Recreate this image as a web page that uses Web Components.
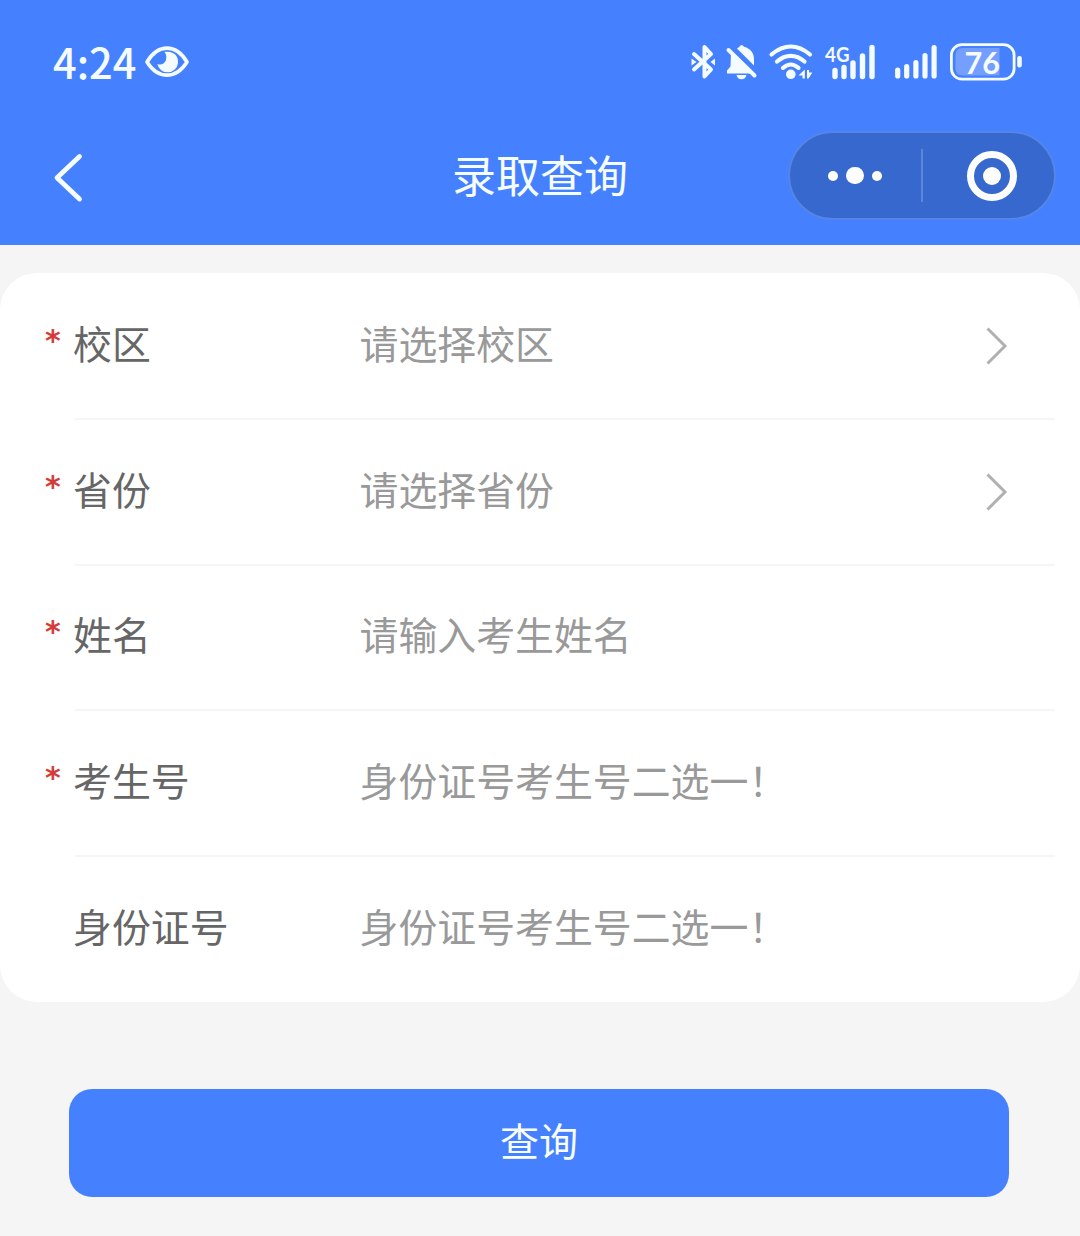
<!DOCTYPE html>
<html lang="zh-CN">
<head>
<meta charset="utf-8">
<title>录取查询</title>
<style>
html,body{margin:0;padding:0}
body{width:1080px;height:1236px;overflow:hidden;background:#f5f5f5;font-family:"Noto Sans CJK SC","Noto Sans",sans-serif}
</style>
</head>
<body>
<query-page></query-page>
<script>
const define = (name, html) => {
  const t = document.createElement('template');
  t.innerHTML = html;
  customElements.define(name, class extends HTMLElement {
    constructor() {
      super();
      this.attachShadow({ mode: 'open' }).appendChild(t.content.cloneNode(true));
    }
  });
};

define('status-bar', `
<style>
:host{display:flex;height:124px;box-sizing:border-box;padding:0 58px 0 53px;align-items:center;justify-content:space-between;color:#f4fcff}
svg{display:block;flex:none}
.left,.right{display:flex;align-items:center}
.time{font:500 41.500px/50px "Noto Sans CJK SC",sans-serif;width:92px;white-space:nowrap;margin-bottom:3px}
</style>
<div class="left">
  <span class="time">4:24</span>
  <svg width="44" height="34" viewBox="0 0 44 34"><path d="M2 17C13-1.500 31-1.500 42 17C31 34.500 13 34.500 2 17Z" fill="none" stroke="currentColor" stroke-width="3.600" stroke-linejoin="round"/><path d="M19.500 7C29 5.500 33.500 11 33 18A10.500 10.500 0 0 1 12.300 19C16 20.500 20 18.500 21 15C22 11.500 21 9 19.500 7Z" fill="currentColor"/></svg>
</div>
<div class="right">
  <svg width="28" height="44" viewBox="690 40 28 44"><path d="M694 54L711 69.500L704.500 76.500V47L711 54L694 69.500" fill="none" stroke="currentColor" stroke-width="4" stroke-linejoin="round" stroke-linecap="round"/><path d="M691.500 58.500L696.500 62L691.500 65.500ZM715 58.500L710.500 62L715 65.500Z" fill="currentColor"/></svg>
  <svg width="46" height="44" viewBox="718 40 46 44"><path d="M728.500 50L754.500 75.500" stroke="currentColor" stroke-width="4" stroke-linecap="round"/><path d="M737 48.500C738 47.500 739 47 739.500 46.700Q741.500 43.300 744 46.700C751 48.500 754 53.500 754 59V65.500ZM731 53L751 73.500H727V70.500L730.500 66.500ZM736.500 75H746.500Q745.500 79.200 741.500 79.200Q737.500 79.200 736.500 75Z" fill="currentColor"/></svg>
  <svg width="56" height="44" viewBox="764 40 56 44"><g fill="none" stroke="currentColor" stroke-width="4.200" stroke-linecap="round"><path d="M771.500 54.500Q781 46.500 790.800 46.500Q800.500 46.500 810 54.500"/><path d="M777 61.500Q783.500 55.800 790.800 55.800Q798 55.800 804.500 61.500"/><path d="M783 67.800Q787 64.500 790.800 64.500Q794.500 64.500 798.500 67.800"/></g><circle cx="790.800" cy="74.300" r="4.800" fill="currentColor"/><path d="M804.800 69.500V78.500H802.500V75.500H798.500ZM807 70H809V72.500H812.300L808.500 78.500H807Z" fill="currentColor"/></svg>
  <svg width="64" height="44" viewBox="820 40 64 44"><text x="825" y="61.500" font-family="Lato,sans-serif" font-weight="700" font-size="21" textLength="24.500" lengthAdjust="spacingAndGlyphs" fill="currentColor">4G</text><path d="M835 70.500V76.500M844 67.500V76.500M853 63V76.500M862.500 56V76.500M872 47.500V76.500" stroke="currentColor" stroke-width="5.400" stroke-linecap="round"/></svg>
  <svg width="58" height="44" viewBox="884 40 58 44"><path d="M897.700 70V76M906.700 66.500V76M915.900 62.500V76M925 55.500V76M934.100 47.500V76" stroke="currentColor" stroke-width="5.200" stroke-linecap="round"/></svg>
  <svg width="80" height="44" viewBox="942 40 80 44"><path d="M999.500 48V75.500H963Q955.500 75.500 955.500 68V55.500Q955.500 48 963 48Z" fill="#759fff"/><rect x="951.400" y="44.700" width="62.700" height="34.500" rx="10.500" fill="none" stroke="currentColor" stroke-width="2.800"/><rect x="1017.200" y="56" width="4.600" height="11.500" rx="2.200" fill="currentColor"/><text x="964.500" y="73.500" font-family="Lato,sans-serif" font-weight="700" font-size="30.500" textLength="35.500" lengthAdjust="spacingAndGlyphs" fill="currentColor">76</text></svg>
</div>`);

define('capsule-menu', `
<style>
:host{display:flex;box-sizing:border-box;width:268px;height:89px;border:2px solid #5585e6;border-radius:45px;background:#3768ce;align-items:center}
.side{flex:1;display:flex;justify-content:center;align-items:center}
.dots{gap:8px}
i{display:block;width:10px;height:10px;border-radius:50%;background:#fff}
i.big{width:17.500px;height:17.500px}
.line{width:2px;height:53px;background:#5c86dc}
.ring{box-sizing:border-box;width:50px;height:50px;border:7px solid #fff;border-radius:50%;display:grid;place-items:center;margin-left:7px}
.ring i{width:18px;height:18px}
</style>
<div class="side dots"><i></i><i class="big"></i><i></i></div><div class="line"></div><div class="side"><div class="ring"><i></i></div></div>`);

define('nav-bar', `
<style>
:host{display:grid;grid-template-columns:1fr auto 1fr;height:121px;padding:0 24.500px 0 50px;align-items:start;box-sizing:border-box;color:#f6fdff}
svg{display:block;margin-top:25px}
h1{margin:20px 0 0;font-size:44px;line-height:60px;font-weight:400;white-space:nowrap;transform:translateX(-12.750px)}
capsule-menu{margin-top:7px;justify-self:end}
</style>
<svg width="40" height="56" viewBox="50 149 40 56"><path d="M79.500 156.500L57 177.700L79.500 199" fill="none" stroke="currentColor" stroke-width="4.800" stroke-linecap="round" stroke-linejoin="round"/></svg>
<h1><slot></slot></h1>
<capsule-menu></capsule-menu>`);

define('form-card', `
<style>:host{display:block;margin-top:28px;background:#fff;border-radius:37px;height:729px}</style><slot></slot>`);

define('form-row', `
<style>
:host{display:flex;height:145.800px;box-sizing:border-box;position:relative;padding:0 71px 8px 45px;align-items:center;font-size:38.900px;line-height:56px;color:#666}
.star{width:28px;height:56px;color:#d43c3c;flex:none;font:700 30px/54px "DejaVu Sans",sans-serif}
.star::before{content:"*"}
.label{width:286.500px;flex:none}
.value{flex:1;color:#999;white-space:nowrap}
.rule{position:absolute;left:75px;right:25px;bottom:-1px;height:2px;background:#f6f6f6}
svg{display:none;margin-top:9px}
:host([picker]) svg{display:block}
:host(:not([required])) .star::before{content:none}
:host([last]) .rule{display:none}
</style>
<span class="star"></span><span class="label"><slot name="label"></slot></span><span class="value"><slot></slot></span>
<svg width="26" height="42" viewBox="0 0 26 42"><path d="M4.500 3.500L22 21L4.500 38.500" fill="none" stroke="#b0b0b0" stroke-width="3"/></svg>
<div class="rule"></div>`);

define('submit-button', `
<style>
:host{display:block;margin:87px 71px 0 69px}
button{display:block;width:100%;height:108px;border:0;border-radius:23px;background:#4581ff;color:#f8fdff;font:400 39px/56px "Noto Sans CJK SC",sans-serif;padding:0 0 9px}
</style><button><slot></slot></button>`);

define('query-page', `
<style>
:host{display:block}
header{background:#4581ff;height:245px}
</style>
<header><status-bar></status-bar><nav-bar>录取查询</nav-bar></header>
<form-card>
  <form-row required picker><span slot="label">校区</span>请选择校区</form-row>
  <form-row required picker><span slot="label">省份</span>请选择省份</form-row>
  <form-row required><span slot="label">姓名</span>请输入考生姓名</form-row>
  <form-row required><span slot="label">考生号</span>身份证号考生号二选一！</form-row>
  <form-row last><span slot="label">身份证号</span>身份证号考生号二选一！</form-row>
</form-card>
<submit-button>查询</submit-button>`);
</script>
</body>
</html>
